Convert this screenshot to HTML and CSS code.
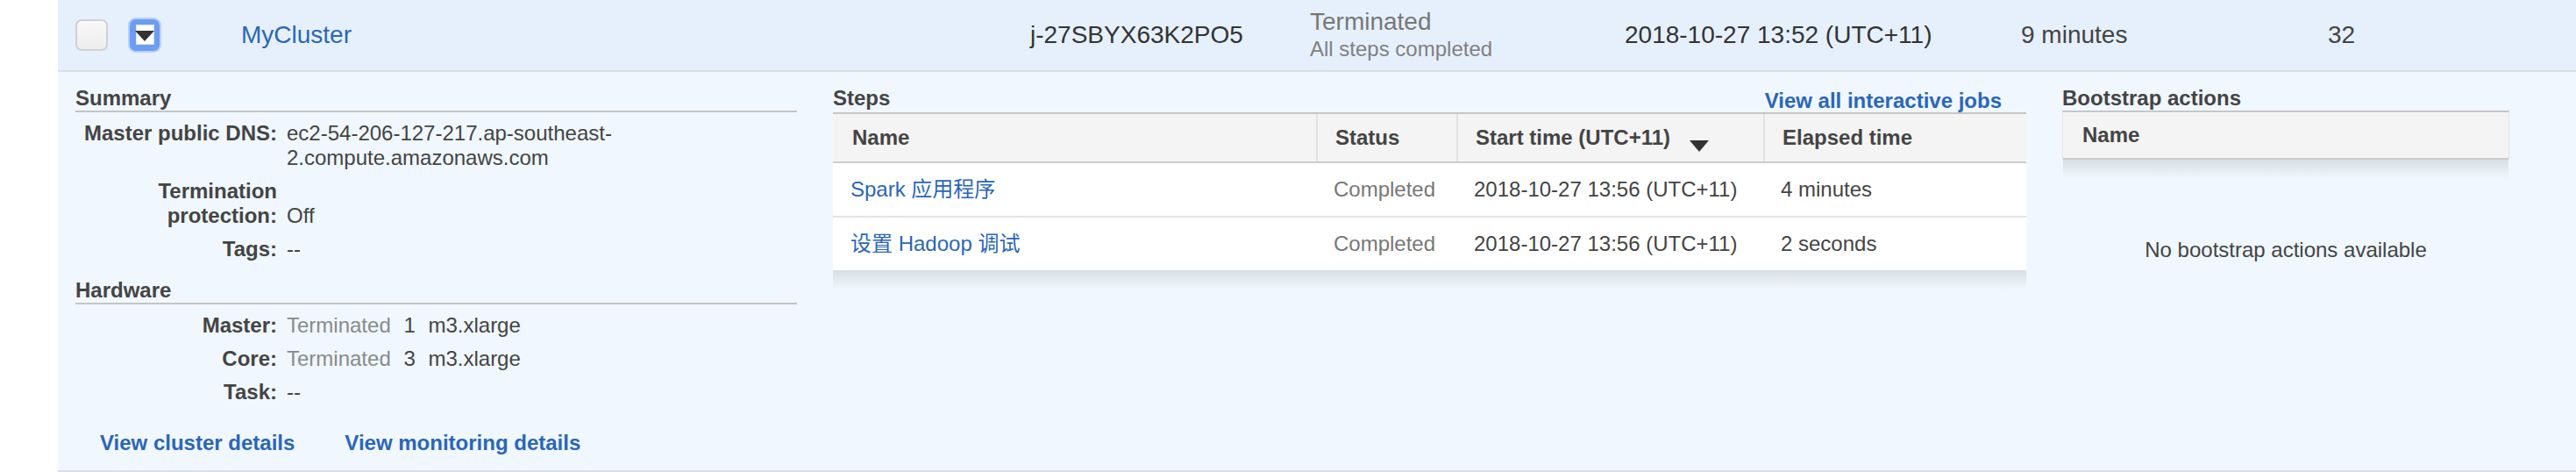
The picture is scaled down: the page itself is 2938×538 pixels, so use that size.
FILE: index.html
```html
<!DOCTYPE html>
<html lang="en">
<head>
<meta charset="utf-8">
<title>Clusters</title>
<link rel="stylesheet" href="styles.css">
</head>
<body>
<div class="cluster">
  <div class="row">
    <div class="c-sel"><span class="checkbox"></span></div>
    <div class="c-exp">
      <svg class="expander" width="38" height="40" viewBox="0 0 38 40">
        <rect x="0" y="0" width="38" height="40" rx="9" fill="#b8cff7"/>
        <rect x="2" y="2" width="34" height="36" rx="7" fill="#6d9df3"/>
        <rect x="9" y="8" width="21" height="23" fill="#ffffff"/>
        <rect x="9.5" y="8.5" width="20" height="22" fill="none" stroke="#d6e3fa" stroke-width="1"/>
        <path d="M8 15 H30 L19 27 Z" fill="#333333"/>
      </svg>
    </div>
    <div class="c-name"><a href="#">MyCluster</a></div>
    <div class="c-id">j-27SBYX63K2PO5</div>
    <div class="c-status">
      <div class="st-main">Terminated</div>
      <div class="st-sub">All steps completed</div>
    </div>
    <div class="c-date">2018-10-27 13:52 (UTC+11)</div>
    <div class="c-elapsed">9 minutes</div>
    <div class="c-hours">32</div>
  </div>

  <div class="details">
    <section class="col-summary">
      <h3 class="sec-title ruled">Summary</h3>
      <dl class="props">
        <dt>Master public DNS:</dt>
        <dd>ec2-54-206-127-217.ap-southeast-<wbr>2.compute.amazonaws.com</dd>
        <dt>Termination protection:</dt>
        <dd>Off</dd>
        <dt>Tags:</dt>
        <dd>--</dd>
      </dl>
      <h3 class="sec-title ruled hw">Hardware</h3>
      <dl class="props">
        <dt>Master:</dt>
        <dd><span class="muted hwv">Terminated</span> <span class="hwv">1</span> <span>m3.xlarge</span></dd>
        <dt>Core:</dt>
        <dd><span class="muted hwv">Terminated</span> <span class="hwv">3</span> <span>m3.xlarge</span></dd>
        <dt>Task:</dt>
        <dd>--</dd>
      </dl>
      <div class="links">
        <a href="#">View cluster details</a>
        <a href="#">View monitoring details</a>
      </div>
    </section>

    <section class="col-steps">
      <div class="steps-head">
        <h3 class="sec-title">Steps</h3>
        <a href="#" class="viewall">View all interactive jobs</a>
      </div>
      <div class="tbl steps-tbl">
        <div class="tr thead">
          <div class="th">Name</div>
          <div class="th">Status</div>
          <div class="th">Start time (UTC+11)
            <svg class="sort" width="22" height="13" viewBox="0 0 22 13"><path d="M0 0 H22 L11 13 Z" fill="#333"/></svg>
          </div>
          <div class="th">Elapsed time</div>
        </div>
        <div class="tbody">
          <div class="tr">
            <div class="td"><a href="#">Spark 应用程序</a></div>
            <div class="td muted2">Completed</div>
            <div class="td">2018-10-27 13:56 (UTC+11)</div>
            <div class="td">4 minutes</div>
          </div>
          <div class="tr">
            <div class="td"><a href="#">设置 Hadoop 调试</a></div>
            <div class="td muted2">Completed</div>
            <div class="td">2018-10-27 13:56 (UTC+11)</div>
            <div class="td">2 seconds</div>
          </div>
        </div>
      </div>
    </section>

    <section class="col-boot">
      <h3 class="sec-title">Bootstrap actions</h3>
      <div class="tbl boot-tbl">
        <div class="thead boot-head">
          <div class="th">Name</div>
        </div>
      </div>
      <div class="empty">No bootstrap actions available</div>
    </section>
  </div>
</div>
</body>
</html>
```
FILE: styles.css
```css
* {
  box-sizing: border-box;
}

html,
body {
  margin: 0;
  padding: 0;
  background: #ffffff;
}

body {
  width: 2938px;
  height: 538px;
  overflow: hidden;
  font-family: "Liberation Sans", Arial, Helvetica, "Noto Sans CJK SC", sans-serif;
  color: #444444;
}

a {
  color: #2a66b8;
  text-decoration: none;
}

.cluster {
  margin-left: 66px;
}

/* ---------- collapsed row ---------- */
.row {
  display: flex;
  align-items: center;
  height: 82px;
  background: #e6f0fc;
  border-bottom: 2px solid #dcdfe3;
  font-size: 28px;
  color: #333333;
}

.c-sel {
  width: 80px;
  padding-left: 20px;
}

.checkbox {
  display: block;
  width: 37px;
  height: 36px;
  border: 2px solid #d0d0d0;
  border-radius: 7px;
  background: linear-gradient(#f8f8f8, #ededed);
}

.c-exp {
  width: 129px;
}

.expander {
  display: block;
}

.c-name {
  width: 900px;
}

.c-id {
  width: 319px;
}

.c-status {
  width: 359px;
  align-self: flex-start;
  padding-top: 10px;
  color: #777777;
}

.st-main {
  line-height: 30px;
}

.st-sub {
  font-size: 24px;
  line-height: 32px;
  color: #808080;
}

.c-date {
  width: 452px;
}

.c-elapsed {
  width: 350px;
  color: #444444;
}

.c-hours {
  color: #444444;
}

/* ---------- expanded details ---------- */
.details {
  display: grid;
  grid-template-columns: 823px 1361px 510px;
  column-gap: 41px;
  align-items: start;
  padding: 16px 0 17px 20px;
  background: #f0f7fe;
  border-bottom: 2px solid #dcdfe3;
  font-size: 24px;
  line-height: 28px;
}

.sec-title {
  margin: 0;
  font-size: 24px;
  line-height: 28px;
  font-weight: bold;
  color: #444444;
}

.sec-title.ruled {
  border-bottom: 2px solid #c4c4c4;
}

.sec-title.hw {
  margin-top: 19px;
}

.props {
  display: grid;
  grid-template-columns: 230px 1fr;
  column-gap: 11px;
  row-gap: 10px;
  margin: 0;
  padding-top: 10px;
}

.props dt {
  font-weight: bold;
  text-align: right;
  color: #444444;
}

.props dd {
  margin: 0;
  align-self: end;
  color: #444444;
}

.muted {
  color: #8a8a8a;
}

.hwv {
  margin-right: 8px;
}

.links {
  display: flex;
  gap: 57px;
  margin-top: 30px;
  padding-left: 28px;
  font-weight: bold;
}

/* ---------- steps ---------- */
.steps-head {
  display: flex;
  justify-content: space-between;
  height: 30px;
}

.viewall {
  font-weight: bold;
  padding-top: 3px;
  margin-right: 28px;
}

.tbl {
  position: relative;
  background: #ffffff;
  border-top: 2px solid #c6c6c6;
}

.tbl::after {
  content: "";
  position: absolute;
  left: 0;
  right: 0;
  top: 100%;
  height: 22px;
  background: linear-gradient(rgba(0, 0, 0, 0.1), rgba(0, 0, 0, 0));
}

.tr {
  display: grid;
  grid-template-columns: 551px 160px 350px 300px;
}

.thead {
  height: 56px;
  background: #f4f4f4;
  border-bottom: 2px solid #cdcdcd;
}

.th {
  display: flex;
  align-items: center;
  padding-left: 20px;
  font-weight: bold;
  color: #444444;
}

.th:first-child {
  padding-left: 22px;
}

.th + .th {
  border-left: 2px solid #e2e2e2;
}

.sort {
  margin-left: 22px;
  margin-top: 18px;
}

.tbody .tr {
  height: 60px;
  align-items: center;
}

.tbody .tr + .tr {
  height: 62px;
  border-top: 2px solid #e4e4e4;
}

.td {
  padding-left: 20px;
  color: #444444;
}

.muted2 {
  color: #777777;
}

/* ---------- bootstrap ---------- */
.boot-tbl {
  border-left: 1px solid #e6e6e6;
  border-right: 1px solid #e6e6e6;
}

.boot-head {
  height: 54px;
  display: flex;
}

.empty {
  margin-top: 89px;
  text-align: center;
  color: #444444;
}
```
